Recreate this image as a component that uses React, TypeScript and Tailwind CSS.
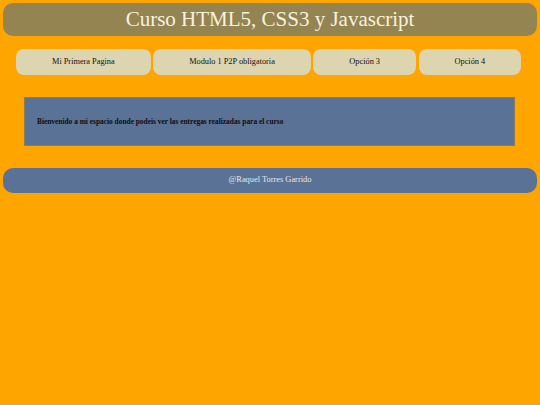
export default function App() {
  const items = ["Mi Primera Pagina", "Modulo 1 P2P obligatoria", "Opción 3", "Opción 4"];
  return (
    <div
      className="min-h-[405px] w-[540px] bg-[#ffa500] p-[3px]"
      style={{ fontFamily: '"Liberation Serif", "Times New Roman", serif' }}
    >
      <header className="flex h-[33px] items-center justify-center rounded-[10px] bg-[#948452]">
        <h1 className="text-[21px] leading-none text-[#f7f2de]">Curso HTML5, CSS3 y Javascript</h1>
      </header>
      <nav className="ml-[13px] mt-[13px] flex gap-[2.5px]">
        {items.map((t) => (
          <div
            key={t}
            className="flex h-[26px] shrink-0 items-center justify-center whitespace-nowrap rounded-[8px] bg-[#ddd4b0] px-[36px] text-[8.3px] text-[#111111]"
          >
            {t}
          </div>
        ))}
      </nav>
      <section className="mx-[22px] mt-[22px] ml-[21px] flex h-[49px] items-center border border-[#8a7d5c] bg-[#5a7295] pl-[12px]">
        <p className="text-[7.4px] font-bold text-[#0d0d14]">
          Bienvenido a mi espacio donde podeis ver las entregas realizadas para el curso
        </p>
      </section>
      <footer className="mt-[22px] flex h-[25px] items-center justify-center rounded-[10px] bg-[#5a7295]">
        <span className="text-[8.4px] text-[#e6e8ee]">@Raquel Torres Garrido</span>
      </footer>
    </div>
  );
}
